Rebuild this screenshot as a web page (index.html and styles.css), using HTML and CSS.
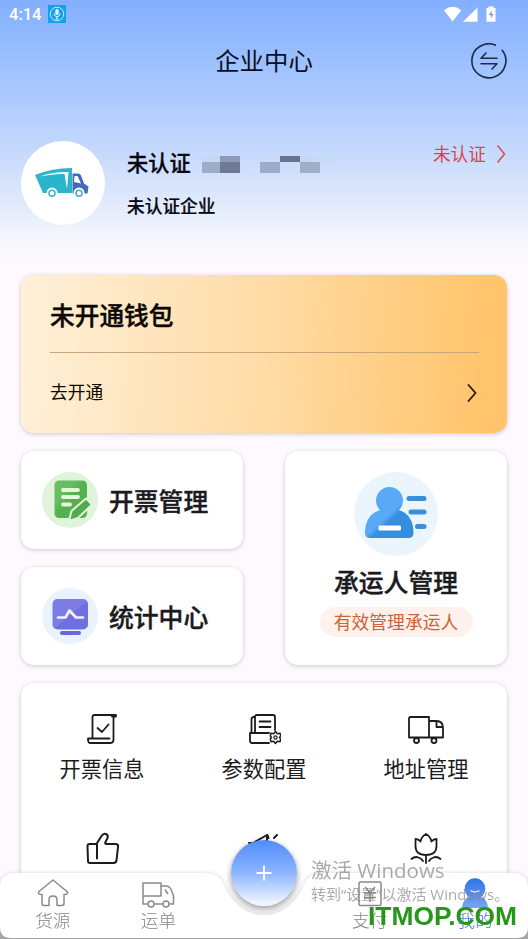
FILE: index.html
```html
<!DOCTYPE html>
<html lang="zh-CN">
<head>
<meta charset="utf-8">
<title>企业中心</title>
<link rel="stylesheet" href="styles.css">
</head>
<body>
<div class="screen">
  <header class="hero">
    <div class="status">
      <span class="clock">4:14</span>
      <svg class="mic" viewBox="0 0 18 18" width="18" height="18"><rect width="18" height="18" fill="#16a0ea"/><circle cx="9" cy="9" r="6.8" fill="none" stroke="#bfeaff" stroke-width="1"/><rect x="7.3" y="4" width="3.4" height="6" rx="1.7" fill="#e8fbff"/><path d="M6 8.5c0 4 6 4 6 0M9 11.5V14M7.5 14h3" fill="none" stroke="#e8fbff"/></svg>
      <svg class="signals" viewBox="0 0 52 17" width="52" height="17"><path d="M0 4.2Q8.5-2.5 17.3 4.2L8.6 15.5Z" fill="#fff"/><path d="M19 15.8 33.5 1.5V15.8Z" fill="#fff"/><path d="M42.5 2h2V.5h5V2h2v13.8h-9Z" fill="#fff"/><path d="M47.6 4.5 44.8 9h2v3.6l2.8-4.7h-2Z" fill="#7d9bd0"/></svg>
    </div>
    <div class="titlebar">
      <h1>企业中心</h1>
      <svg class="swap" viewBox="0 0 36 36" width="36" height="36" fill="none" stroke="#1d2a48" stroke-width="1.6" stroke-linecap="round" stroke-linejoin="round"><path d="M24.300 2.100A17 17 0 1 0 31.200 7.300"/><path d="M26 15.300H10L15 10M10 20.700h16L21 26"/></svg>
    </div>
    <div class="profile">
      <div class="avatar">
        <svg viewBox="0 0 54 32" width="54" height="32"><path d="M0 8Q17 1 37 1V26H8Z" fill="#2ab5cc"/><path d="M5 9.500Q18 6.500 29.500 7L32 22 33.500 5Q17 4.500 5 9.500Z" fill="#f4ffff"/><path d="M37.500 6.500h5.500q2 0 3 2l3 8 4.500 3-1 7H37.500Z" fill="#4668b5"/><path d="M39.500 9h3l3.500 7.500-7-1.500Z" fill="#fff"/><circle cx="17" cy="26" r="5.500" fill="#fff"/><circle cx="44" cy="26" r="5.500" fill="#fff"/><g fill="none" stroke="#3fb2c4" stroke-width="1.500"><circle cx="17" cy="26.200" r="3"/><circle cx="44" cy="26.200" r="3"/></g></svg>
      </div>
      <div class="who">
        <div class="name">未认证
          <svg viewBox="0 0 136 17" width="136" height="17"><path fill="#c2d3f2" d="M0 0h18v6H0zM98 0h18v6H98z" opacity=".6"/><path fill="#c8d8f6" d="M118 0h16v11h-16z" opacity=".4"/><path fill="#9eacc8" d="M0 6h18v11H0zM58 6h20v11H58z"/><path fill="#8b9bb9" d="M18 0h20v6H18z"/><path fill="#6f7b92" d="M18 6h20v11H18z"/><path fill="#67768f" d="M78 0h20v6H78z"/><path fill="#a1aec6" d="M98 6h20v11H98z"/></svg>
        </div>
        <div class="company">未认证企业</div>
      </div>
      <div class="verify">未认证<svg viewBox="0 0 10 20" width="10" height="20"><path d="m1.500 2.500 7 8.500-7 8.500" fill="none" stroke="#e0464d" stroke-width="1.500"/></svg></div>
    </div>
  </header>

  <main>
    <section class="wallet">
      <h2>未开通钱包</h2>
      <div class="open"><span>去开通</span><svg viewBox="0 0 10 20" width="10" height="20"><path d="m1.500 3 7 8-7 8" fill="none" stroke="#2b1a10" stroke-width="1.800" stroke-linecap="round"/></svg></div>
    </section>

    <section class="tiles">
      <div class="tile">
        <svg viewBox="0 0 56 56" width="56" height="56"><defs><linearGradient id="g" x2="1" y2="1"><stop offset=".3" stop-color="#67be5f"/><stop offset=".5" stop-color="#55b04f"/></linearGradient></defs><circle cx="28" cy="28" r="28" fill="#e0f4dc"/><rect x="12.500" y="8.500" width="32.500" height="37.500" rx="4.500" fill="url(#g)"/><g stroke="#e3f7dd" stroke-width="3.800" stroke-linecap="round"><path d="M21 18h15M21 25h15M21 32.500h7"/></g><path d="m27 49 2.500-10L44 26.500l6 6L36 46Z" fill="#53a94e" stroke="#e0f4dc" stroke-width="2" stroke-linejoin="round"/></svg>
        <b>开票管理</b>
      </div>
      <div class="tile">
        <svg viewBox="0 0 56 56" width="56" height="56"><defs><linearGradient id="p" x2="1" y2="1"><stop offset=".5" stop-color="#7d7ce5"/><stop offset=".52" stop-color="#6f6fdf"/></linearGradient></defs><circle cx="28" cy="28" r="28" fill="#e9f3fe"/><rect x="10.500" y="11" width="35.500" height="30.500" rx="5" fill="url(#p)"/><path d="M16 29.500h7.500l4-7 6.500 7h7" fill="none" stroke="#eef0ff" stroke-width="2.700" stroke-linecap="round" stroke-linejoin="round"/><rect x="18" y="43" width="21" height="4" rx="2" fill="#6969d4"/></svg>
        <b>统计中心</b>
      </div>
      <div class="tile carrier">
        <svg viewBox="0 0 84 84" width="84" height="84"><defs><linearGradient id="b" gradientUnits="userSpaceOnUse" x1="20" y1="20" x2="56" y2="60"><stop offset=".5" stop-color="#5aa9f5"/><stop offset=".6" stop-color="#348fe0"/></linearGradient></defs><circle cx="42" cy="42" r="42" fill="#ebf5fe"/><path d="M26 38a13.500 13.500 0 1 1 19 0Q59.500 43 59.500 61q0 5-5 5H16q-5 0-5-5Q11 43 26 38Z" fill="url(#b)"/><rect x="24.500" y="53.500" width="22.500" height="5" rx="1" fill="#fff"/><g stroke="#3a8fd9" stroke-width="5" stroke-linecap="round"><path d="M55 26.500h15M57 40h13M63.500 54.500H70"/></g></svg>
        <b>承运人管理</b>
        <em>有效管理承运人</em>
      </div>
    </section>

    <section class="menu">
      <div class="item"><svg viewBox="0 0 34 34" width="34" height="34"><path d="M7.500 26V5q0-2 2-2h21.500q-2.500 0-2.500 3.500v21q0 3.500-3 3.500H5q-2 0-2-4.500h21.500M27 4.500h4M12.500 16l4.500 4 6.500-7.500"/></svg><span>开票信息</span></div>
      <div class="item"><svg viewBox="0 0 34 34" width="34" height="34"><path d="M22 21H3v7.500Q3 31 5 31h17M4.500 21V7q0-2 2.500-2M8 21V5q0-2 2-2h16q2 0 2 2v13M12.500 9.500h11M12.500 15h11"/><path d="m28.500 19.500 1.800 2.200 2.800-.4.600 2.700-1.200 1.500 1.200 1.500-.6 2.700-2.800-.4-1.800 2.200-1.800-2.200-2.800.4-.6-2.700 1.200-1.500-1.200-1.500.6-2.700 2.800.4Z" stroke-width="1.500"/><circle cx="28.500" cy="25.500" r="1.600" stroke-width="1.200"/></svg><span>参数配置</span></div>
      <div class="item"><svg class="lorry" viewBox="0 0 38 34" width="38" height="34"><path d="M2 6.500Q2 5 3.500 5H22v20.500H2ZM22 9h7.500q6.500 0 6.500 7v9.500H22M29.500 9.500v5.500H36"/><circle cx="9.500" cy="28.500" r="2.500" fill="#fff"/><circle cx="27" cy="28.500" r="2.500" fill="#fff"/></svg><span>地址管理</span></div>
      <div class="item"><svg viewBox="0 0 34 34" width="34" height="34"><path d="M2.500 14q0-2 2-2H11.500L16.500 4q2-3 4.500-2t1.500 4l-2 4q-1 2 1 2h9q3 0 2.500 3L31.500 28.500q-.5 2.500-3 2.500H5q-2 0-2-2ZM12 12.500v14" stroke-width="2"/></svg></div>
      <div class="item"><svg viewBox="0 0 34 34" width="34" height="34"><path d="M2 11h4L20 3v24M20.500 3l1 3M27 6l3-3" stroke-width="2"/></svg></div>
      <div class="item"><svg viewBox="0 0 34 34" width="34" height="34"><path d="M6.500 7q3 0 5 2.500 1-5 5.500-7.500 4.500 2.500 5.500 7.500 2-2.500 5-2.500v7q0 9-10.500 9t-10.500-9Z M17 23v8"/><path d="M2.500 27q3.500-3 7-1.500 3 1 4.500 3.500M31.500 27q-3.500-3-7-1.500-3 1-4.500 3.500"/></svg></div>
    </section>
  </main>

  <nav class="tabs">
    <svg class="bar" viewBox="0 0 528 66" width="528" height="66"><rect y="55" width="528" height="11" fill="#a6a4a8"/><path d="M14 0H206Q219 0 223 10C232 31 247 42 264 42S296 31 305 10Q309 0 322 0H514Q528 1 528 15V54Q528 65 517 65H11Q0 65 0 54V15Q0 1 14 0Z" fill="#fff"/></svg>
    <div class="tab"><svg viewBox="0 0 32 30" width="32" height="30"><path d="M16 2 2 13.500q-2 3 3 3v9q0 2 2 2h5v-6q0-3.500 4-3.500t4 3.500v6h5q2 0 2-2v-9q5 0 3-3Z"/></svg>货源</div>
    <div class="tab"><svg viewBox="0 0 34 30" width="34" height="30"><path d="M6.500 26H2V5h18v13H2M20 8h5.500q4 0 6 7l1 3v8h-4M13.500 26h8M24 11.500l3 4.500"/><circle cx="10" cy="26" r="3"/><circle cx="25" cy="26" r="3"/></svg>运单</div>
    <div class="tab"></div>
    <div class="tab"><svg viewBox="0 0 30 30" width="30" height="30"><rect x="4" y="4" width="22" height="23.500" rx="1.500"/><path d="m10 9 5 5.500L20 9M9 15h12M9 19.500h12M15 15v9"/></svg>支付</div>
    <div class="tab active"><svg viewBox="0 0 30 30" width="30" height="30"><defs><linearGradient id="m" x2="0" y2="1"><stop stop-color="#2f73e6"/><stop offset="1" stop-color="#79a6f4"/></linearGradient></defs><path d="M9 19a10.300 10.300 0 1 1 12 0q7 3 7 11H2q0-8 7-11Z" fill="url(#m)" stroke="none"/><path d="M10.500 12.500q4.500 3 9 0" stroke="#dce8ff"/></svg>我的</div>
    <button class="add" aria-label="新增"><svg viewBox="0 0 16 16" width="16" height="16"><path d="M8 .5v15M.5 8h15" stroke="#fff" stroke-width="1.800"/></svg></button>
  </nav>

  <div class="activate"><p>激活 Windows</p><small>转到“设置”以激活 Windows。</small></div>
  <div class="site">ITMOP.COM</div>
</div>
</body>
</html>
```
FILE: styles.css
```css
* { box-sizing: border-box; margin: 0; padding: 0; }
body { font-family: "Noto Sans CJK SC", sans-serif; color: #1b1b1d; }
svg { display: block; flex: none; }

.screen { position: relative; width: 528px; height: 939px; overflow: hidden; background: #fdf9fe; }

.hero { height: 275px; background: linear-gradient(#82afff 0, #bbd3fe 130px, #dce7fb 195px, #f7f9fd 245px, #fdf9fe 266px); }
.status { display: flex; align-items: center; height: 28px; padding: 0 32px 0 9px; }
.clock { width: 39px; color: #fff; font: 500 16.5px/28px Roboto, sans-serif; padding-top: 2px; }
.signals { margin-left: auto; }
.titlebar { display: grid; grid-template-columns: 36px 1fr 36px; align-items: center; height: 66px; padding: 0 21px; }
.titlebar h1 { grid-column: 2; text-align: center; font-size: 24.4px; line-height: 34px; padding-bottom: 2px; font-weight: 400; color: #0b0f20; }

.profile { display: flex; padding: 47px 22px 0 21px; }
.avatar { display: grid; place-items: center; width: 84px; height: 84px; border-radius: 50%; background: #fff; padding-right: 3px; }
.who { margin-left: 22px; color: #060810; }
.name { display: flex; gap: 11px; align-items: center; font-size: 21.2px; line-height: 30px; font-weight: 500; padding-top: 6px; -webkit-text-stroke: .3px; }
.name svg { margin-top: 4px; }
.company { font-size: 17.7px; line-height: 26px; font-weight: 500; margin-top: 15px; -webkit-text-stroke: .2px; }
.verify { display: flex; align-items: center; gap: 10px; height: 24px; margin-left: auto; color: #dc444a; font-size: 17.7px; }

main { padding: 0 21px; }
.wallet { height: 158px; padding: 19px 28px 0 29px; border-radius: 13px; background: linear-gradient(93deg, #fff0d9 0, #ffdda9 47%, #ffc46c 95%); box-shadow: 0 1px 4px rgba(60, 40, 60, .25); color: #0b0806; }
.wallet h2 { height: 59px; font-size: 24.7px; line-height: 40px; font-weight: 500; border-bottom: 1px solid #c7a67c; -webkit-text-stroke: .4px; }
.open { display: flex; justify-content: space-between; align-items: center; height: 76px; padding-right: 2px; font-size: 17.7px; }
.open svg { margin-top: 2px; }

.tiles { display: grid; grid-template-columns: 222px 222px; grid-template-rows: 98px 98px; gap: 18px 42px; margin-top: 18px; }
.tile { display: flex; align-items: center; gap: 11px; padding-left: 21px; border-radius: 13px; background: #fff; box-shadow: 0 1px 4px rgba(60, 50, 70, .24); }
.tile b { font-size: 24.8px; line-height: 36px; font-weight: 500; -webkit-text-stroke: .4px; }
.carrier { grid-column: 2; grid-row: 1 / 3; flex-direction: column; gap: 0; padding: 21px 0 0; }
.carrier b { margin-top: 7px; }
.carrier em { width: 153px; height: 30px; margin-top: 8px; border-radius: 15px; background: #fff2ec; color: #cd6138; font-size: 17.8px; line-height: 28px; font-style: normal; text-align: center; }

.menu { display: grid; grid-template-columns: repeat(3, 1fr); grid-auto-rows: 120px; height: 270px; margin-top: 18px; padding-top: 29px; border-radius: 13px; background: #fff; box-shadow: 0 1px 4px rgba(60, 50, 70, .24); }
.item { display: flex; flex-direction: column; align-items: center; font-size: 21.2px; line-height: 32px; gap: 6px; }
.item svg { fill: none; stroke: #1c1c1e; stroke-width: 1.8; stroke-linejoin: round; stroke-linecap: round; }

.tabs { position: absolute; left: 0; bottom: 0; width: 528px; height: 66px; display: grid; grid-template-columns: repeat(5, 1fr); filter: drop-shadow(0 0 2px rgba(70, 60, 80, .22)); }
.bar { position: absolute; inset: 0; }
.tab { position: relative; display: flex; flex-direction: column; align-items: center; padding-top: 5px; font-size: 17.6px; line-height: 24px; font-weight: 300; color: #858587; }
.tab svg { fill: none; stroke: #8a8a8c; stroke-width: 1.5; stroke-linejoin: round; }
.active { color: #3d7ce9; }
.add { position: absolute; left: 231px; top: -33px; width: 66px; height: 66px; border: 0; border-radius: 50%; display: grid; place-items: center; background: linear-gradient(#4f8dfc, #8db5fe 50%, #f0f5ff 96%); box-shadow: 0 4px 6px rgba(80, 70, 80, .38); }

.activate { position: absolute; left: 311px; top: 857px; color: rgba(130, 130, 134, .68); font-family: "Open Sans", "Noto Sans CJK SC", sans-serif; white-space: nowrap; }
.activate p { font-size: 20.5px; line-height: 27px; }
.activate small { display: block; font-size: 15px; line-height: 21px; }
.site { position: absolute; left: 368px; top: 901px; color: #27971b; font: 700 26.4px/30px "Liberation Sans", sans-serif; }
```
